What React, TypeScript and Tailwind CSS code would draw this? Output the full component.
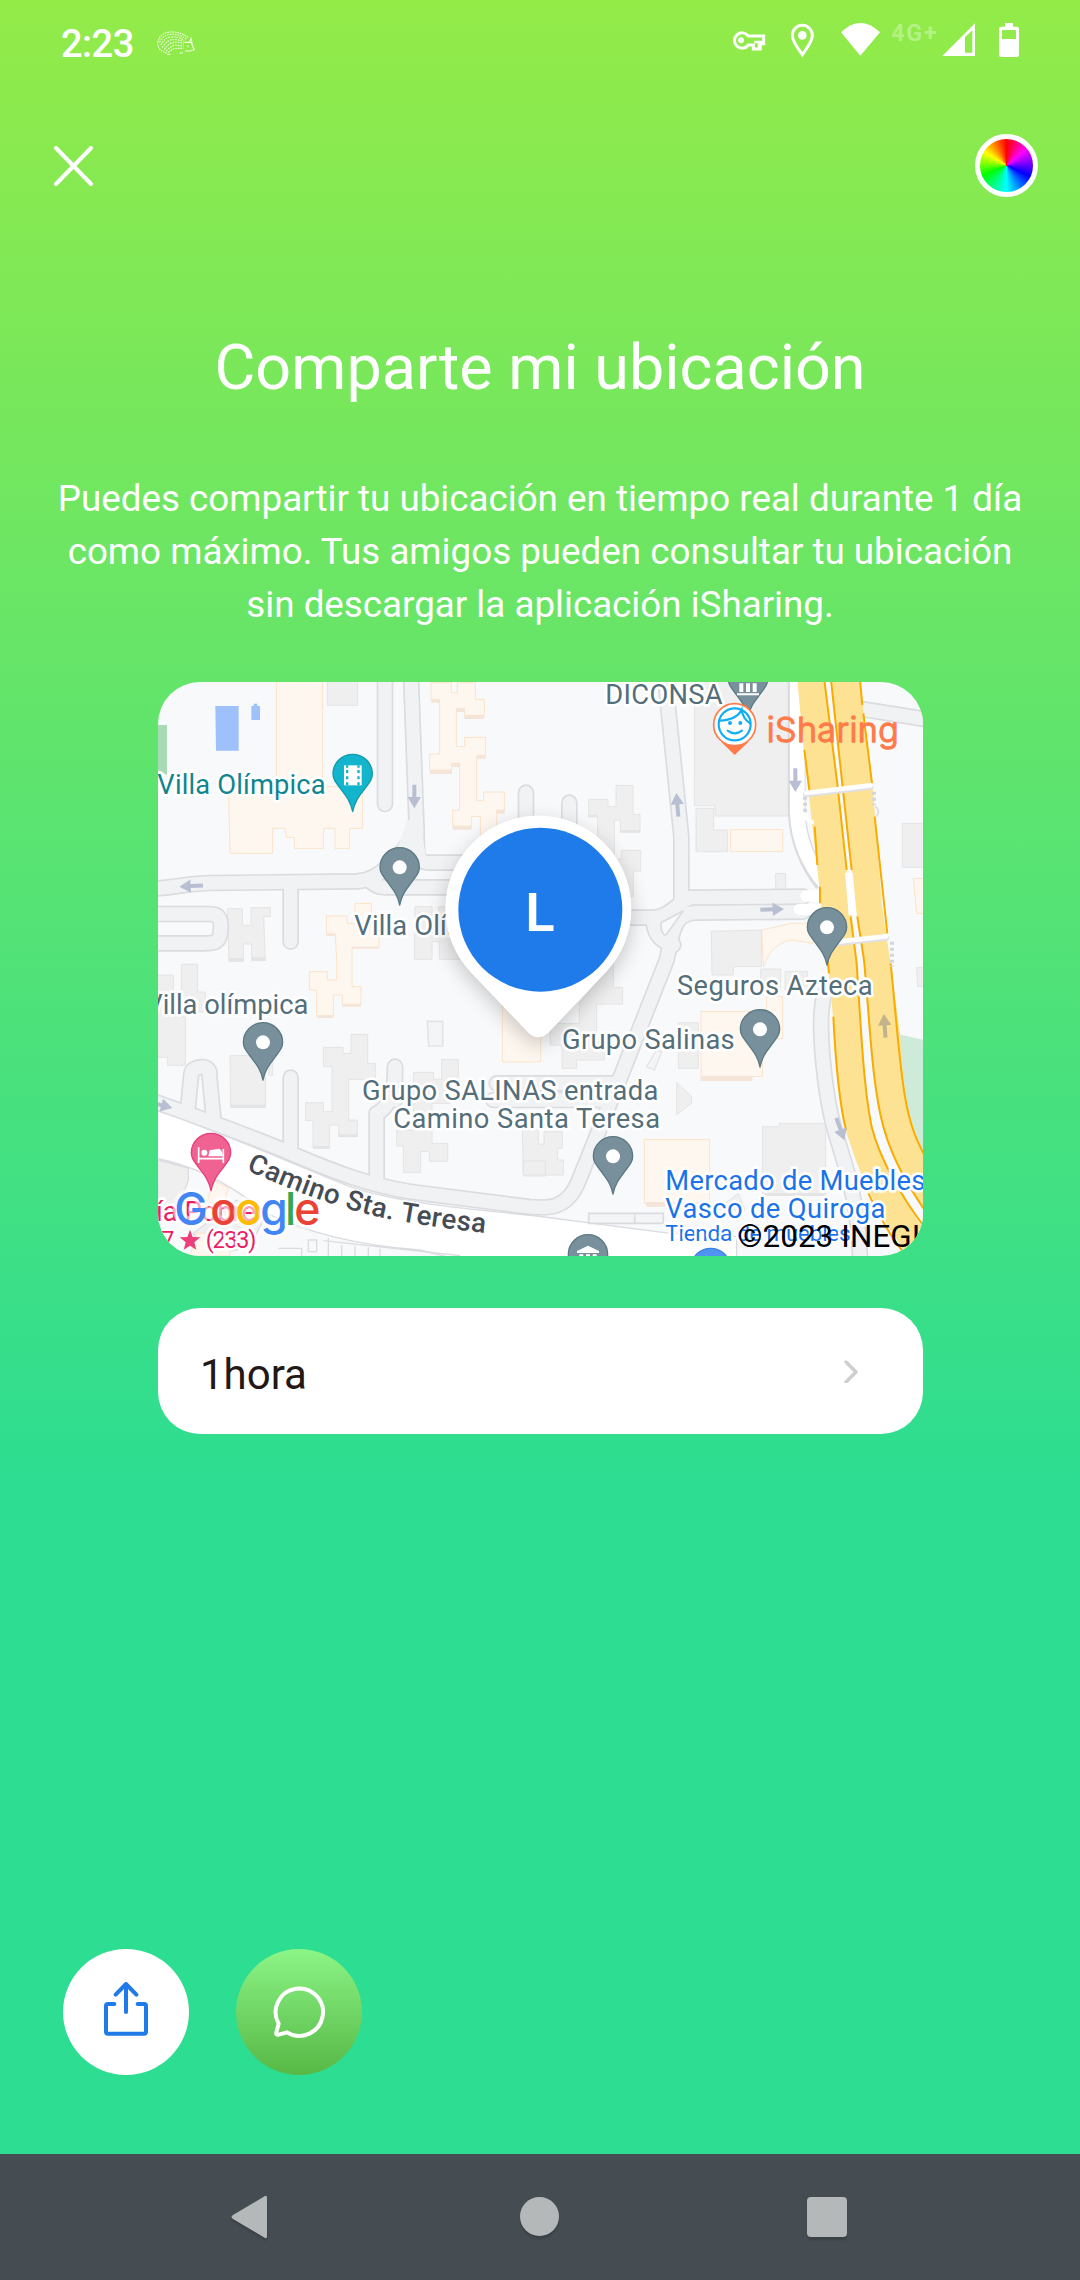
import React from "react";

const ROADS = [
  "M0 657 C80 652 120 639 180 639 L620 634 C680 630 700 596 740 570 L800 480 L783 20",
  "M660 634 C690 655 690 652 720 652 L1000 652",
  "M800 480 C800 560 800 578 840 578 L1000 578",
  "M705 20 V402",
  "M422 640 V815",
  "M1128 500 V368",
  "M1258 510 V398",
  "M0 732 H180 C215 732 215 760 211 790 C206 818 195 820 160 820 H0",
  "M1430 743 H1510 C1560 740 1580 700 1620 683 L1960 680",
  "M1545 20 L1594 500 V700",
  "M1960 725 L1640 728 C1590 728 1575 760 1565 800 L1550 870 L1412 1220 L1285 1535 C1250 1620 1190 1615 1140 1611 L780 1565 C660 1545 560 1510 400 1440 C280 1390 140 1340 0 1290",
  "M1510 745 C1510 790 1530 815 1570 825",
  "M112 1330 L124 1210 C126 1188 185 1180 178 1215 L190 1340",
  "M422 1430 V1223",
  "M680 1530 V1330 Q735 1305 735 1190",
  "M735 1290 V1192",
  "M1040 1240 H1400",
  "M1030 1290 H1370",
  "M2140 118 L2330 148",
];

function Pin({ x, y, fill = "#78909c", stroke = "#5c7883", children }: { x: number; y: number; fill?: string; stroke?: string; children?: React.ReactNode }) {
  return (
    <g transform={`translate(${x} ${y})`}>
      <path
        d="M0 113 C-6 82 -20 66 -35 46 C-50 26 -59 16 -59 0 A59 59 0 1 1 59 0 C59 16 50 26 35 46 C20 66 6 82 0 113Z"
        fill={fill}
        stroke={stroke}
        strokeWidth="4"
        strokeLinejoin="round"
      />
      {children ?? <circle r="21" fill="#fff" />}
    </g>
  );
}

function Arrow({ x, y, r, fill = "#b9bfd2" }: { x: number; y: number; r: number; fill?: string }) {
  return <path transform={`translate(${x} ${y}) rotate(${r})`} d="M0 -36 L20 -2 H6 V35 H-6 V-2 H-20Z" fill={fill} />;
}

function Label({ x, y, w, size = 82, fill = "#546e7a", end, children }: { x: number; y: number; w?: number; size?: number; fill?: string; end?: boolean; children: React.ReactNode }) {
  return (
    <text
      x={x}
      y={y}
      textLength={w}
      textAnchor={end ? "end" : "start"}
      fontSize={size}
      fill={fill}
      stroke="#fff"
      strokeWidth="16"
      strokeLinejoin="round"
      paintOrder="stroke"
    >
      {children}
    </text>
  );
}

const Museum = ({ dy = 0 }: { dy?: number }) => (
  <path transform={`translate(0 ${dy})`} d="M-33 -14 L0 -30 L33 -14 V-8 H-33Z M-26 -4 H-14 V22 H-26Z M-6 -4 H6 V22 H-6Z M14 -4 H26 V22 H14Z M-33 26 H33 V32 H-33Z" fill="#fff" />
);

function MapView() {
  return (
    <svg viewBox="24 36 2295 1722" className="block h-[574px] w-[765px]" fontFamily="Roboto, sans-serif">
      <defs>
        <filter id="soft" x="-40%" y="-40%" width="180%" height="180%">
          <feGaussianBlur stdDeviation="30" />
        </filter>
        <path id="camino" d="M288 1500 C432 1566 600 1626 720 1648 C820 1666 900 1678 1040 1693" />
      </defs>
      <rect x="0" y="0" width="2340" height="1800" fill="#f8f9fb" />

      {/* parks and pools */}
      <path d="M24 165 H51 V315 L24 300Z" fill="#a8dab5" />
      <path d="M196 108 H266 V242 H198Z M304 108 H311 V101 H322 V108 H330 V150 H304Z" fill="#9fc1fb" />
      <path d="M2245 1093 L2330 1112 V1460 C2280 1370 2262 1290 2245 1093Z" fill="#ceead9" />

      {/* commercial blocks */}
      <g fill="#fef7f0" stroke="#fce3c8" strokeWidth="3">
        <path d="M379 30 H518 V350 H638 V475 H599 V535 H555 V475 H521 V535 H433 V502 H410 L404 475 H368 V550 H240 L236 370 H379Z" />
        <path d="M843 38 H904 V68 H922 V38 H976 V88 H1003 V136 H943 V115 H919 V230 H944 V202 H1007 V256 H980 V392 H1001 V366 H1064 V420 H1040 V500 H991 V440 H965 V468 H908 V421 H929 V280 H905 V300 H839 V252 H869 V88 H843Z" />
        <path d="M529 738 H592 V760 H615 V700 H665 V760 H687 V832 H606 V950 H633 V1003 H577 V975 H550 V1037 H500 V960 H478 V905 H532 V930 H560 V870 L556 795 H529Z" />
        <path d="M1741 479 H1898 V545 H1741Z" />
        <path d="M1057 1000 H1172 V1176 H1057Z" />
        <path d="M1653 1024 H1837 V1220 H1653Z" />
        <path d="M1850 980 H1898 V1106 H1870 L1850 1060Z" />
        <path d="M1483 1408 H1679 V1600 H1483Z" />
        <path d="M1835 780 L1925 760 H1990 V820 L1925 810 C1880 820 1860 840 1840 890Z" />
        <path d="M2290 625 H2330 V730 H2300Z" />
      </g>
      <path d="M844 88 h26 v10 h-26z M943 136 h60 v11 h-60z M839 301 h67 v11 h-67z M980 256 h27 v10 h-27z M908 468 h57 v11 h-57z M919 115 h25 v11 h-25z M905 280 h25 v11 h-25z M1040 420 h24 v11 h-24z M500 1037 h50 v7 h-50z M577 1003 h56 v7 h-56z M1652 1217 h155 v16 h-155z M1488 1596 h160 v14 h-160z M606 830 h82 v6 h-82z M529 790 h27 v7 h-27z" fill="#f5e5d8" />

      {/* buildings */}
      <g fill="#efefef" stroke="#e4e4e5" strokeWidth="3">
        <path d="M532 30 H623 V106 H532Z" />
        <path d="M232 716 H277 V766 H303 V713 H361 V740 H341 L346 872 H305 V822 H280 V874 H237Z" />
        <path d="M94 883 H143 V966 H166 V1026 H95 V1040 H106 V1186 H53 V1162 H24 V915 H70 V976 H94Z" />
        <path d="M240 1157 H346 V1312 H242Z M357 1150 H368 V1216 H357Z" />
        <path d="M520 1132 H579 V1150 H603 V1093 H653 V1180 H676 V1228 H596 V1350 H622 V1400 H566 V1365 H538 V1434 H489 V1352 H467 V1298 H520 V1325 H546 V1190 H520Z" />
        <path d="M791 1207 H851 V1228 H875 V1168 H925 V1222 H900 V1300 H846 V1420 H893 V1474 H838 V1445 H812 V1508 H760 V1428 H740 V1380 H791Z" />
        <path d="M795 710 H846 V760 H866 V710 H930 V868 H868 V815 H846 V868 H793Z" />
        <path d="M1316 388 H1374 V410 H1398 V346 H1449 V433 H1470 V486 H1411 V450 H1393 V568 H1414 V541 H1472 V603 H1450 V680 H1343 V440 H1316Z" />
        <path d="M1390 880 V952 H1418 V1002 H1340 V1115 H1364 V1170 H1280 V1195 H1236 V1125 H1200 V1060 H1288 V1000Z" />
        <path d="M1634 30 H1919 V438 H1695 V407 H1633Z" />
        <path d="M1638 415 H1691 V480 H1733 V545 H1638Z" />
        <path d="M1877 610 H1907 V663 H1877Z" />
        <path d="M1684 784 L1834 780 V890 H1750 V915 H1686Z" />
        <path d="M1832 897 H1892 V960 H1832Z M1905 904 H1972 V960 H1905Z" />
        <path d="M1585 1058 H1645 V1195 H1585Z" />
        <path d="M1580 1237 L1625 1280 V1300 L1580 1334Z" />
        <path d="M1838 1370 H1888 V1360 H2027 V1576 H1838Z" />
        <path d="M2257 460 H2330 V592 H2257Z" />
        <path d="M2300 893 H2340 V950 H2303Z" />
        <path d="M1117 1380 H1165 V1422 H1182 V1385 H1237 V1435 H1223 V1470 H1240 V1515 H1120Z M1120 1473 H1186 V1518 H1120Z" />
        <path d="M832 1054 H878 V1128 H836Z" fill="#f4f5f7" strokeWidth="5" />
        <path d="M1520 1140 L1535 1145 L1513 1200 L1490 1190Z" fill="#f4f5f7" strokeWidth="4" />
        <path d="M1700 1620 L1765 1570 L1785 1620Z" />
      </g>
      <path d="M242 1304 h105 v10 h-105z M566 1393 h56 v8 h-56z M489 1428 h50 v8 h-50z M237 864 h44 v10 h-44z M305 862 h41 v10 h-41z M1316 434 h26 v8 h-26z M1411 480 h60 v8 h-60z M1838 1570 h189 v8 h-189z" fill="#e4e4e5" />

      {/* streets */}
      <g fill="none" stroke="#dadce0" strokeWidth="50" strokeLinecap="round" strokeLinejoin="round">
        {ROADS.map((d) => (
          <path key={d} d={d} />
        ))}
        <path d="M2024 970 C1998 1050 2025 1290 2060 1400 C2090 1500 2125 1600 2130 1760" />
      </g>
      <g fill="none" stroke="#f1f2f4" strokeWidth="40" strokeLinecap="round" strokeLinejoin="round">
        {ROADS.map((d) => (
          <path key={d} d={d} />
        ))}
        <path d="M2024 970 C1998 1050 2025 1290 2060 1400 C2090 1500 2125 1600 2130 1760" />
      </g>
      <path d="M740 540 L772 450 L808 450 L832 580 L760 620Z" fill="#f1f2f4" />
      <path d="M1533 758 L1600 722 L1548 795 Q1533 795 1533 758Z" fill="#f8f9fb" stroke="#dadce0" strokeWidth="5" />

      {/* avenue at the bottom */}
      <path d="M0 1315 C200 1378 420 1480 600 1550 C760 1605 1000 1620 1160 1638 L1560 1690 L1760 1700 V1800 H1050 L810 1740 C620 1725 480 1690 350 1630 C240 1540 120 1480 0 1462Z" fill="#fff" stroke="#dadce0" strokeWidth="4" />
      <path d="M24 1470 L115 1494 V1530 L90 1600 L24 1640Z M260 1590 L345 1640 L300 1730 L180 1758 L130 1690Z" fill="#efefef" stroke="#dadce0" strokeWidth="4" />
      <path d="M190 1530 L235 1555 L215 1620 L170 1600Z M140 1690 H240 V1758 H120Z" fill="#fef7f0" stroke="#fce3c8" strokeWidth="3" />
      <path d="M475 1710 H500 V1745 H475Z M535 1705 V1758 M385 1735 H455 V1758 M575 1725 V1758 M615 1728 V1758 M655 1732 V1758 M690 1736 V1758 M520 1712 L930 1757" fill="none" stroke="#dadce0" strokeWidth="4" />
      <path d="M1316 1630 H1540 V1660 H1316Z M1454 1630 V1660" fill="#f4f5f7" stroke="#dadce0" strokeWidth="5" />

      {/* side lane and highway */}
      <path d="M1940 20 V430 C1945 500 1965 570 2020 640" fill="none" stroke="#dadce0" strokeWidth="54" />
      <path d="M1942 20 V430 C1945 500 1965 570 2030 645" fill="none" stroke="#fff" strokeWidth="44" />
      <path d="M1968 678 H2020 M1948 718 H2020" stroke="#fff" strokeWidth="34" strokeLinecap="round" />
      <path
        d="M1942 30 L1963 260 L2000 580 L2032 870 L2051 1060 C2062 1220 2075 1330 2090 1390 C2120 1480 2150 1580 2265 1745 L2330 1800 V1470 C2270 1340 2260 1260 2250 1090 L2220 870 L2195 700 L2170 370 L2130 30Z"
        fill="#fde293"
      />
      <path
        d="M2023 30 L2063 350 L2090 600 L2120 880 C2132 1060 2140 1250 2165 1370 C2190 1470 2260 1590 2330 1690 V1630 C2290 1570 2230 1480 2200 1370 C2165 1240 2160 1060 2142 870 L2120 740 L2105 600 L2080 370 L2043 30Z"
        fill="#f8f9fb"
      />
      <g fill="none" stroke="#f9ab00" strokeWidth="6">
        <path d="M1963 240 L1978 360 M1994 470 L2002 585 M2010 650 V700 M2033 870 L2037 910 M2050 1040 C2058 1200 2068 1300 2088 1380 M2155 1570 C2190 1640 2220 1700 2270 1758" />
        <path d="M2023 30 L2063 350 L2090 600 M2102 740 L2120 880 C2132 1060 2140 1250 2165 1370 C2190 1470 2260 1590 2330 1680" />
        <path d="M2043 30 L2080 370 L2105 600 M2122 740 L2142 870 C2160 1060 2165 1240 2200 1370 C2230 1480 2290 1570 2330 1630" />
        <path d="M2130 30 L2137 105 M2140 130 L2166 340 M2174 440 L2212 790 M2222 880 C2240 1060 2250 1200 2265 1280 C2280 1370 2300 1410 2330 1470" />
      </g>
      <path d="M2085 608 H2108 L2120 735 H2096Z" fill="#fff" />
      <path d="M1968 373 L2162 350 M2070 818 L2208 803" stroke="#dfe1e5" strokeWidth="18" strokeLinecap="round" />
      <path d="M1968 369 L2162 346 M2070 814 L2208 799" stroke="#fff" strokeWidth="14" strokeLinecap="round" />
      <path d="M1965 380 V435 M2172 365 V405 M2226 815 V890" stroke="#d3d6da" strokeWidth="12" strokeDasharray="9 9" />
      <path d="M1965 430 Q1968 455 1992 458" fill="none" stroke="#fff" strokeWidth="12" />
      <path d="M2176 408 Q2194 425 2178 440" fill="none" stroke="#dadce0" strokeWidth="5" />

      <Arrow x={124} y={648} r={-93} />
      <Arrow x={793} y={379} r={180} />
      <Arrow x={1582} y={405} r={-5} />
      <Arrow x={1936} y={330} r={180} />
      <Arrow x={1866} y={718} r={88} />
      <Arrow x={32} y={1305} r={105} />
      <Arrow x={2071} y={1377} r={160} />
      <Arrow x={2204} y={1068} r={-4} fill="#c3b28b" />

      {/* place names */}
      <Label x={22} y={372} w={505} fill="#0f8590">Villa Olímpica</Label>
      <Label x={613} y={795} w={505}>Villa Olímpica</Label>
      <Label x={475} y={1032} end>Villa olímpica</Label>
      <Label x={1366} y={102} w={352}>DICONSA</Label>
      <Label x={1581} y={975} w={587}>Seguros Azteca</Label>
      <Label x={1236} y={1137} w={518}>Grupo Salinas</Label>
      <Label x={636} y={1290} w={889}>Grupo SALINAS entrada</Label>
      <Label x={730} y={1373} w={800}>Camino Santa Teresa</Label>
      <Label x={1546} y={1560} w={780} fill="#1a73e8">Mercado de Muebles</Label>
      <Label x={1546} y={1643} w={660} fill="#1a73e8">Vasco de Quiroga</Label>
      <Label x={1546} y={1713} w={556} size={68} fill="#1a73e8">Tienda de muebles</Label>
      <Label x={318} y={1652} end fill="#e91e63">ía Pobre</Label>
      <Label x={34} y={1735} size={70} fill="#e91e63">7</Label>
      <Label x={167} y={1735} w={152} size={70} fill="#e91e63">(233)</Label>
      <path d="M120 1679 L128 1701 L151 1702 L133 1717 L139 1739 L120 1727 L101 1739 L107 1717 L89 1702 L112 1701Z" fill="#ec407a" />
      <text fontSize="83" fontWeight="500" fill="#454c54" stroke="#fff" strokeWidth="10" paintOrder="stroke">
        <textPath href="#camino" textLength="746">Camino Sta. Teresa</textPath>
      </text>

      <Pin x={608} y={312} fill="#12b5cb" stroke="#129aaa">
        <rect x="-26" y="-26" width="53" height="60" fill="#fff" />
        <path d="M-20 -26 h7 v7 h-7z M-20 -12 h7 v9 h-7z M-20 7 h7 v9 h-7z M-20 25 h7 v9 h-7z M14 -26 h7 v7 h-7z M14 -12 h7 v9 h-7z M14 7 h7 v9 h-7z M14 25 h7 v9 h-7z" fill="#12b5cb" />
      </Pin>
      <Pin x={749} y={592} />
      <Pin x={339} y={1117} />
      <Pin x={1794} y={28}><Museum dy={16} /></Pin>
      <Pin x={2031} y={772} />
      <Pin x={1830} y={1078} />
      <Pin x={1389} y={1459} />
      <Pin x={1314} y={1753}><Museum dy={4} /></Pin>
      <Pin x={1682} y={1794} fill="#4f94f0" stroke="#3d83e6" />
      <Pin x={183} y={1449} fill="#f06292" stroke="#e5417d">
        <path d="M-37 -17 V30 M37 -12 V30 M-37 17 H37" stroke="#fff" strokeWidth="5" />
        <circle cx="-20" cy="-1" r="9" fill="#fff" />
        <path d="M-8 10 L-4 -8 L24 -13 Q34 -8 36 10Z" fill="#fff" />
      </Pin>

      {/* user marker */}
      <g>
        <path d="M962 907 L1135 1088 Q1165 1115 1195 1088 L1368 907 A279 279 0 1 0 962 907Z" fill="#000" opacity=".2" filter="url(#soft)" transform="translate(0 20)" />
        <path d="M962 907 L1135 1088 Q1165 1115 1195 1088 L1368 907 A279 279 0 1 0 962 907Z" fill="#fff" />
        <circle cx="1171" cy="719" r="246" fill="#1e7be9" />
        <text x="1126" y="783" fontSize="163" fontWeight="600" fill="#fff">L</text>
      </g>

      {/* iSharing mark */}
      <g>
        <path d="M1713 215 L1754 255 L1796 215Z" fill="#ff7b4a" />
        <circle cx="1754" cy="164" r="63" fill="#fff" stroke="#ff7b4a" strokeWidth="5" />
        <g fill="none" stroke="#12aef5" strokeWidth="6.5" strokeLinecap="round">
          <circle cx="1754" cy="163" r="48" />
          <path d="M1709 152 C1740 150 1765 140 1775 119 C1777 138 1785 150 1800 160 M1733 182 Q1754 198 1776 182" />
        </g>
        <circle cx="1740" cy="159" r="6" fill="#12aef5" />
        <circle cx="1771" cy="159" r="6" fill="#12aef5" />
        <text x="1850" y="215" textLength="396" fontSize="102" fontWeight="300" fontFamily="Inter, sans-serif" fill="#ff7b4a" stroke="#ff7b4a" strokeWidth="4" strokeLinejoin="round">
          iSharing
        </text>
      </g>

      {/* map attribution */}
      <text y="1664" fontSize="134" fontWeight="500" fontFamily="Inter, sans-serif" stroke="#fff" strokeOpacity=".6" strokeWidth="22" strokeLinejoin="round" paintOrder="stroke">
        <tspan x="73" fill="#4285f4">G</tspan>
        <tspan x="181" fill="#ea4335">o</tspan>
        <tspan x="256" fill="#fbbc04">o</tspan>
        <tspan x="331" fill="#4285f4">g</tspan>
        <tspan x="405" fill="#34a853">l</tspan>
        <tspan x="433" fill="#ea4335">e</tspan>
      </text>
      <text x="1763" y="1730" textLength="548" fontSize="94" fill="#000">©2023 INEGI</text>
    </svg>
  );
}

function Hedgehog() {
  return (
    <svg viewBox="0 0 114 72" className="h-6 w-[38px]" fill="none" stroke="#fff" strokeOpacity=".85" strokeWidth="3.4">
      <path d="M30 66 Q3 60 2 36 Q8 6 38 3 Q72 2 94 20" strokeDasharray="5 2.5" />
      <path d="M8 34 Q16 14 38 10 Q66 8 88 24 M12 42 Q22 20 42 18 Q66 16 82 28 M16 50 Q28 28 46 26 Q66 24 80 34 M22 56 Q32 38 50 34 Q66 32 80 40 M28 60 Q40 46 54 42 L80 46 M34 64 Q46 52 60 52 H80" strokeDasharray="5 3" />
      <path d="M82 34 H102 L112 56 L100 60 H84 M98 32 L102 22 L106 40 M68 66 H78 M30 70 H40" />
      <circle cx="93" cy="46" r="1" />
    </svg>
  );
}

function StatusIcons() {
  return (
    <svg viewBox="90 60 880 120" className="h-10 w-[293.3px]" fill="#fff">
      <g fill="none" stroke="#fff" strokeWidth="9">
        <path d="M145 108 A23 23 0 1 0 145 135 H160 V147 H181 V131 H191 V108Z" />
        <path d="M307 164 C292 141 277 126 277 106 A30 30 0 0 1 337 106 C337 126 322 141 307 164Z" />
      </g>
      <path d="M163 122 H188 V130 H180 V146 H173 V130 H163Z" />
      <circle cx="123" cy="121" r="9" />
      <circle cx="307" cy="106" r="13" />
      <path d="M423 97 Q481 41 540 97 L481 167Z" />
      <text x="574" y="122" textLength="136" fontSize="70" fontWeight="700" fontFamily="Roboto, sans-serif" opacity=".32">4G+</text>
      <path fillRule="evenodd" d="M727 168 L825 70 V168Z M795 112 V158 H817 V91Z" />
      <path fillRule="evenodd" d="M915 69 H939 V80 H951 Q957 80 957 86 V165 Q957 171 951 171 H903 Q897 171 897 165 V86 Q897 80 903 80 H915Z M906 90 V117 H948 V90Z" />
    </svg>
  );
}

export default function App() {
  return (
    <div className="flex h-[2280px] w-[1080px] flex-col overflow-hidden bg-[linear-gradient(180deg,#93eb48_0px,#2cdd92_1500px)] font-['Roboto',sans-serif] text-white">
      <header className="flex h-20 shrink-0 items-start justify-between pt-5 pr-[57px] pl-[61px]">
        <div className="flex items-center">
          <span className="w-[96px] pt-0.5 text-[38px] leading-[44px] font-medium tracking-[-0.5px]">2:23</span>
          <Hedgehog />
        </div>
        <StatusIcons />
      </header>

      <div className="flex h-[171px] shrink-0 items-center justify-between pr-[42px] pl-[54px]">
        <button aria-label="Cerrar">
          <svg viewBox="0 0 39 40" className="h-10 w-[39px]" fill="none" stroke="#fff" strokeWidth="4" strokeLinecap="round">
            <path d="M2 2 L37 38 M37 2 L2 38" />
          </svg>
        </button>
        <button
          aria-label="Color"
          className="size-[63px] rounded-full border-[5px] border-white bg-[conic-gradient(#f00_0deg,#f0f_50deg,#00f_115deg,#0ff_180deg,#0f0_248deg,#ff0_302deg,#f00_360deg)]"
        />
      </div>

      <h1 className="mt-[81px] h-[72px] shrink-0 text-center text-[62.9px] leading-[72px] whitespace-nowrap">Comparte mi ubicación</h1>
      <p className="mt-[68px] shrink-0 text-center text-[36.75px] leading-[53px] whitespace-nowrap">
        Puedes compartir tu ubicación en tiempo real durante 1 día
        <br />
        como máximo. Tus amigos pueden consultar tu ubicación
        <br />
        sin descargar la aplicación iSharing.
      </p>

      <main className="mt-[51px] flex flex-col gap-[52px] pl-[158px]">
        <div className="h-[574px] w-[765px] overflow-hidden rounded-[42px]">
          <MapView />
        </div>
        <button className="flex h-[126px] w-[765px] items-center justify-between rounded-[42px] bg-white pr-16 pl-[42px] text-[#231815]">
          <span className="pt-[7px] text-[42px] leading-[50px]">1hora</span>
          <svg viewBox="0 0 15 24" className="h-6 w-[15px]" fill="none" stroke="#cfcfcf" strokeWidth="3.5" strokeLinecap="round" strokeLinejoin="round">
            <path d="M2 3 L12 13 L2 23" />
          </svg>
        </button>
      </main>

      <div className="mt-auto flex gap-[47px] pb-[79px] pl-[63px]">
        <button aria-label="Compartir" className="flex size-[126px] items-center justify-center rounded-full bg-white">
          <svg viewBox="69 87 378 378" className="size-[126px]" fill="none" stroke="#1e7be9" strokeWidth="12" strokeLinecap="round" strokeLinejoin="round">
            <path d="M223 252 H204 Q198 252 198 258 V335 Q198 341 204 341 H312 Q318 341 318 335 V258 Q318 252 312 252 H293 M258 276 V192 M227 224 L258 192 L289 224" />
          </svg>
        </button>
        <button aria-label="Mensaje" className="flex size-[126px] items-center justify-center rounded-full bg-linear-to-b from-[#8bf585] to-[#57b845]">
          <svg viewBox="588 87 378 378" className="size-[126px]" fill="none" stroke="#fff" strokeWidth="12" strokeLinecap="round" strokeLinejoin="round">
            <path d="M716 311 A71 71 0 1 1 741 337 L716 344 Q707 346 709 337Z" />
          </svg>
        </button>
      </div>

      <nav className="flex h-[126px] shrink-0 items-center justify-between bg-[#454d53] pr-[233px] pb-px pl-[231px]">
        <svg viewBox="0 0 36 44" className="h-11 w-9 drop-shadow-[0_2px_1px_rgba(0,0,0,0.2)]" fill="#b4b8b9">
          <path d="M34 1 Q36 0 36 3 V41 Q36 44 34 43 L2 24 Q-1 22 2 20Z" />
        </svg>
        <div className="ml-[5px] size-[39px] rounded-full bg-[#b4b8b9] shadow-[0_3px_2px_rgba(0,0,0,0.15)]" />
        <div className="size-10 rounded-[4px] bg-[#b4b8b9] shadow-[0_3px_2px_rgba(0,0,0,0.15)]" />
      </nav>
    </div>
  );
}
